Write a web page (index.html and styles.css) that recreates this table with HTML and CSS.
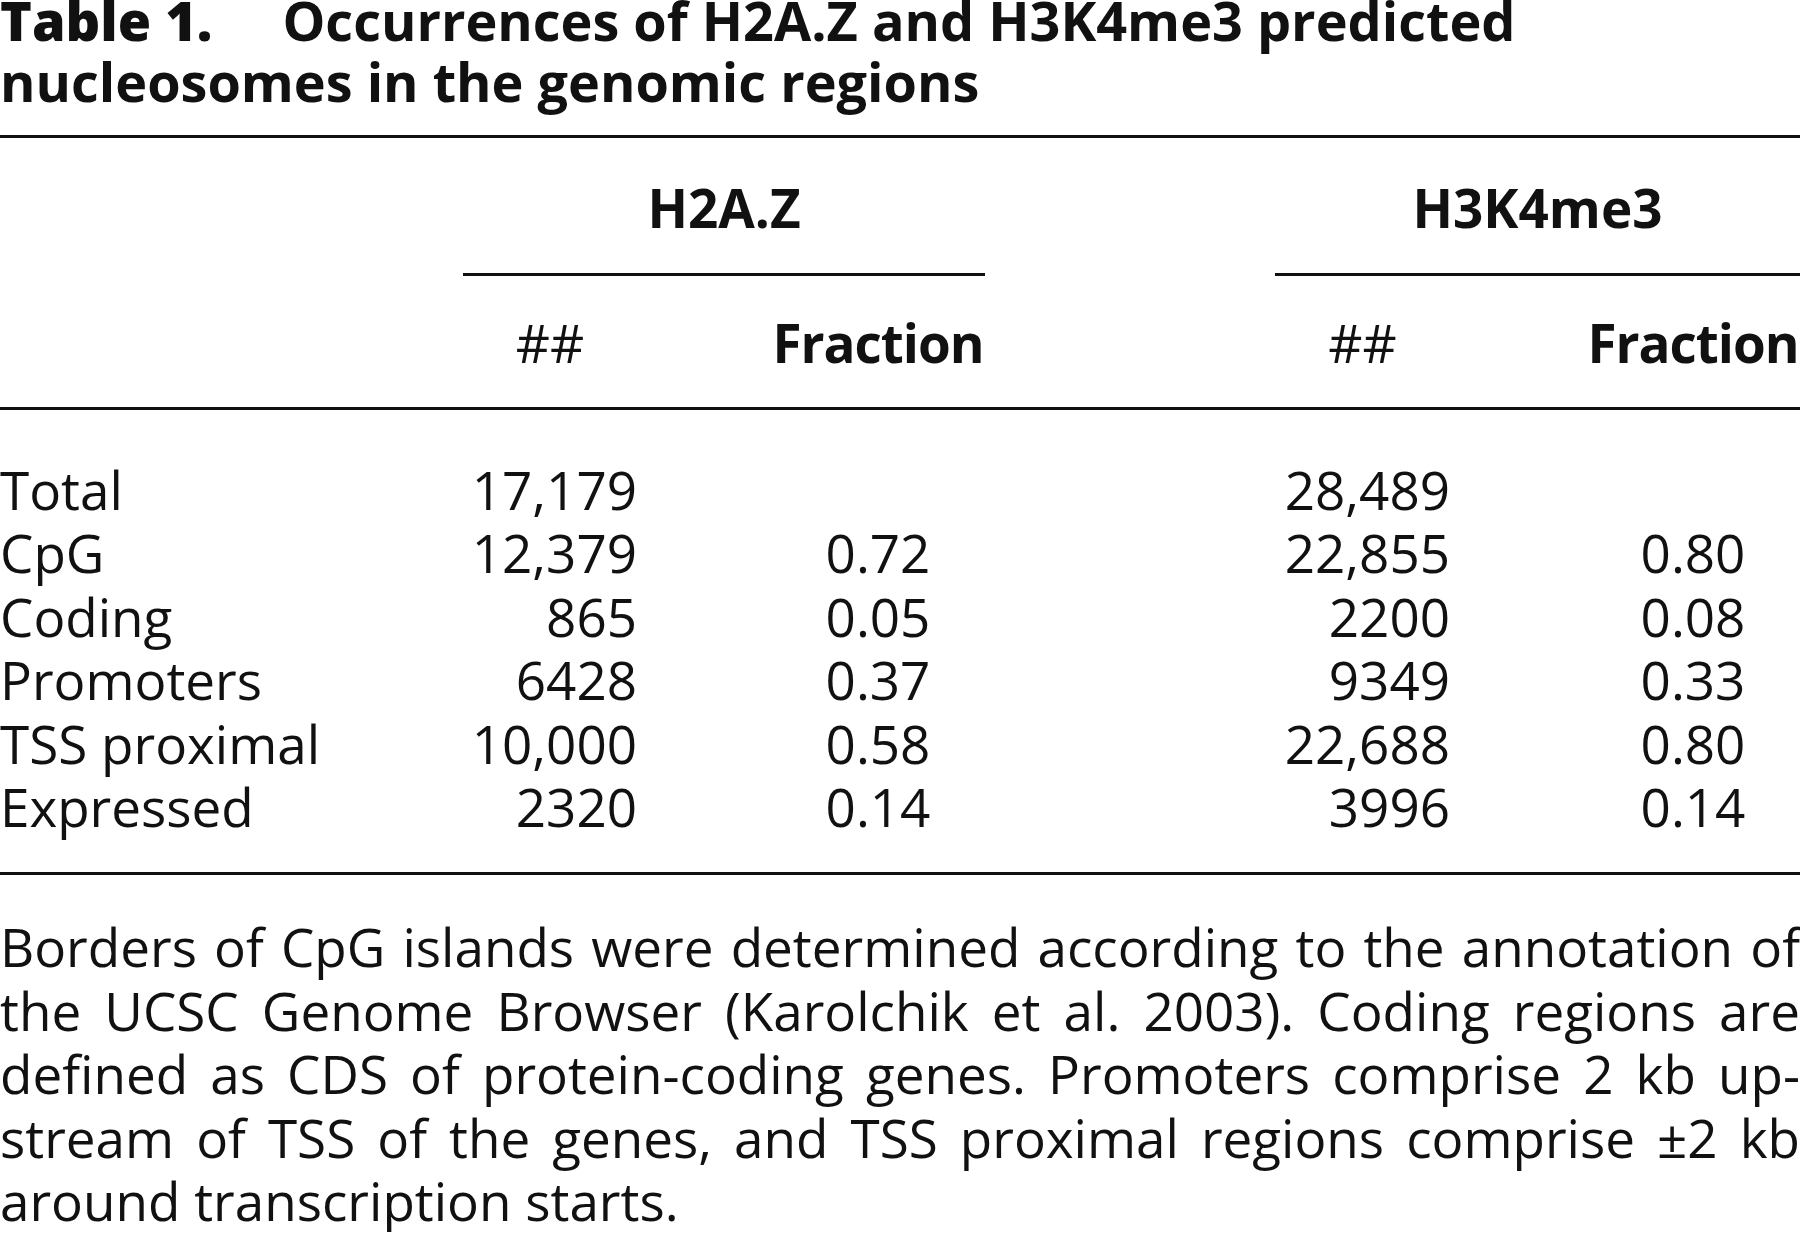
FILE: index.html
```html
<!DOCTYPE html>
<html lang="en">
<head>
<meta charset="utf-8">
<title>Table 1</title>
<link rel="stylesheet" href="styles.css">
</head>
<body>
<div class="page">
  <h1 class="caption"><span class="label">Table 1.</span><span class="caption-text">Occurrences of H2A.Z and H3K4me3 predicted nucleosomes in the genomic regions</span></h1>

  <div class="tbl">
    <div class="grid head1">
      <div class="spanner col-a">H2A.Z</div>
      <div class="spanner col-b">H3K4me3</div>
    </div>
    <div class="grid head2">
      <div class="c2 center">##</div>
      <div class="c4 center bold">Fraction</div>
      <div class="c6 center">##</div>
      <div class="c8 center bold">Fraction</div>
    </div>
    <div class="grid body">
      <div class="c1">Total</div><div class="c2 right">17,179</div><div class="c4 center"></div><div class="c6 right">28,489</div><div class="c8 center"></div>
      <div class="c1">CpG</div><div class="c2 right">12,379</div><div class="c4 center">0.72</div><div class="c6 right">22,855</div><div class="c8 center">0.80</div>
      <div class="c1">Coding</div><div class="c2 right">865</div><div class="c4 center">0.05</div><div class="c6 right">2200</div><div class="c8 center">0.08</div>
      <div class="c1">Promoters</div><div class="c2 right">6428</div><div class="c4 center">0.37</div><div class="c6 right">9349</div><div class="c8 center">0.33</div>
      <div class="c1">TSS proximal</div><div class="c2 right">10,000</div><div class="c4 center">0.58</div><div class="c6 right">22,688</div><div class="c8 center">0.80</div>
      <div class="c1">Expressed</div><div class="c2 right">2320</div><div class="c4 center">0.14</div><div class="c6 right">3996</div><div class="c8 center">0.14</div>
    </div>
  </div>

  <p class="note">Borders of CpG islands were determined according to the annotation of the UCSC Genome Browser (Karolchik et al. 2003). Coding regions are defined as CDS of protein-coding genes. Promoters comprise 2 kb up&shy;stream of TSS of the genes, and TSS proximal regions comprise &plusmn;2 kb around transcription starts.</p>
</div>
</body>
</html>
```

FILE: styles.css
```css
html, body {
  margin: 0;
  padding: 0;
  background: #ffffff;
}

.page {
  width: 1800px;
  font-family: "Open Sans", "Noto Sans", sans-serif;
  font-size: 53px;
  color: #111111;
}

.caption {
  margin: -10px 0 0 0;
  font-size: 54px;
  line-height: 61px;
  font-weight: 700;
}

.caption .label {
  font-weight: 800;
  margin-right: 70px;
}

.tbl {
  margin-top: 23px;
  border-top: 3px solid #111111;
  border-bottom: 3px solid #111111;
}

.grid {
  display: grid;
  grid-template-columns: 463px 174px 134px 214px 290px 175px 136px 214px;
  line-height: 63px;
}

.head1 {
  padding-top: 38px;
}

.spanner {
  font-weight: 700;
  text-align: center;
  padding-bottom: 34px;
  border-bottom: 3px solid #111111;
}

.col-a { grid-column: 2 / 5; }
.col-b { grid-column: 6 / 9; }

.head2 {
  padding-top: 35px;
  padding-bottom: 33px;
  border-bottom: 3px solid #111111;
}

.body {
  padding-top: 48px;
  padding-bottom: 34px;
  grid-auto-rows: 63.4px;
  line-height: 63.4px;
}

.c1 { grid-column: 1; }
.c2 { grid-column: 2; }
.c4 { grid-column: 4; }
.c6 { grid-column: 6; }
.c8 { grid-column: 8; }

.center { text-align: center; }
.right { text-align: right; }
.bold {
  font-weight: 700;
  letter-spacing: -1px;
}

.note {
  margin: 40px 0 0 0;
  line-height: 63.4px;
  text-align: justify;
  hyphens: manual;
}
```
